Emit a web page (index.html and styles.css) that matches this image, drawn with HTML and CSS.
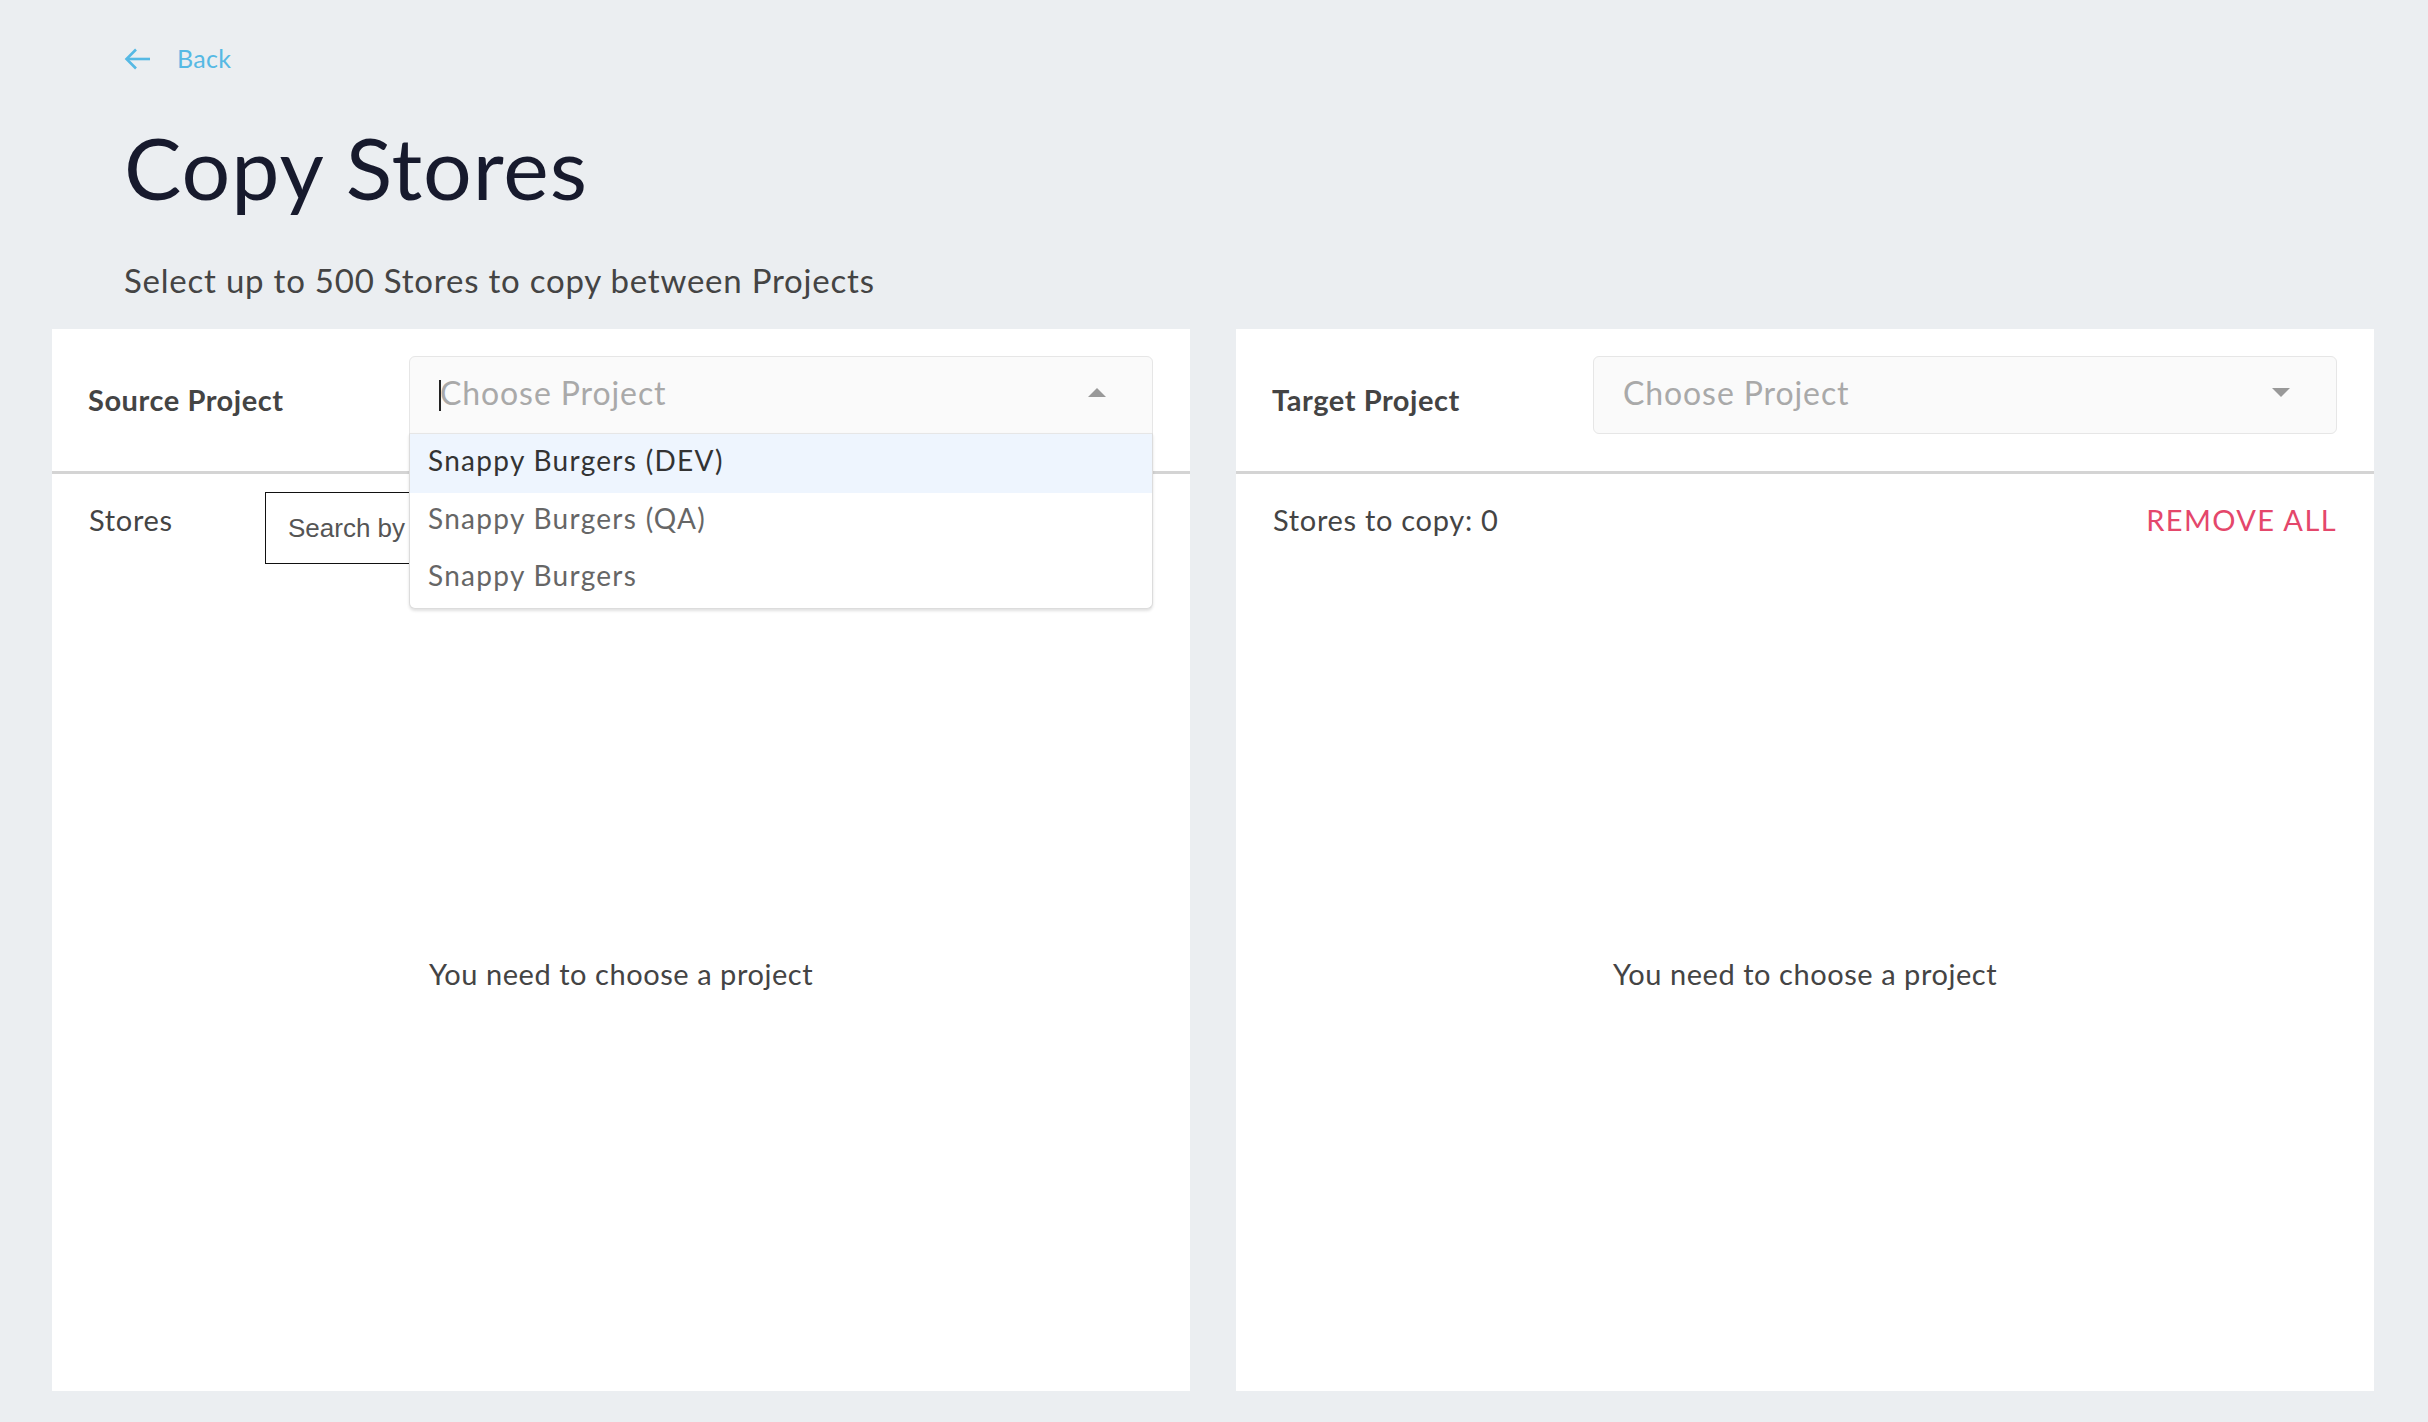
FILE: index.html
```html
<!DOCTYPE html>
<html lang="en">
<head>
<meta charset="utf-8">
<title>Copy Stores</title>
<link rel="stylesheet" href="styles.css">
</head>
<body>
<div class="page">
  <header class="page-head">
    <a class="back" href="#">
      <svg class="back-icon" width="26" height="22" viewBox="0 0 26 22" fill="none" stroke="currentColor" stroke-width="2.6" stroke-linecap="butt" stroke-linejoin="miter">
        <path d="M26 11 H3"/>
        <path d="M12 1.5 L2.5 11 L12 20.5"/>
      </svg>
      <span>Back</span>
    </a>
    <h1 class="title">Copy Stores</h1>
    <p class="subtitle">Select up to 500 Stores to copy between Projects</p>
  </header>

  <main class="columns">
    <section class="panel">
      <div class="panel-head">
        <div class="head-label">Source Project</div>
        <div class="select-wrap">
          <div class="select open">
            <span class="caret-line"></span><span class="placeholder">Choose Project</span>
            <span class="tri tri-up"></span>
          </div>
          <ul class="menu">
            <li class="option active">Snappy Burgers (DEV)</li>
            <li class="option">Snappy Burgers (QA)</li>
            <li class="option">Snappy Burgers</li>
          </ul>
        </div>
      </div>
      <div class="panel-row">
        <div class="row-label stores-label">Stores</div>
        <input class="search" type="text" placeholder="Search by name or ID">
      </div>
      <div class="empty">You need to choose a project</div>
    </section>

    <section class="panel">
      <div class="panel-head">
        <div class="head-label">Target Project</div>
        <div class="select-wrap">
          <div class="select">
            <span class="placeholder">Choose Project</span>
            <span class="tri tri-down"></span>
          </div>
        </div>
      </div>
      <div class="panel-row spread">
        <div class="row-label">Stores to copy: 0</div>
        <a class="remove-all" href="#">REMOVE ALL</a>
      </div>
      <div class="empty">You need to choose a project</div>
    </section>
  </main>
</div>
</body>
</html>
```

FILE: styles.css
```css
* { box-sizing: border-box; }

html, body {
  margin: 0;
  padding: 0;
  background: #ebeef1;
}

body {
  font-family: Lato, "Noto Sans", sans-serif;
  color: #444;
  width: 2428px;
  height: 1422px;
  overflow: hidden;
}

.page {
  padding: 43px 54px 0 52px;
}

.page-head {
  padding-left: 72px;
}

.back {
  display: flex;
  align-items: center;
  gap: 27px;
  height: 30px;
  color: #56b9e4;
  text-decoration: none;
  font-size: 25px;
  line-height: 30px;
  letter-spacing: 0.3px;
}

.back-icon {
  display: block;
  margin-top: 2px;
}

.title {
  margin: 44px 0 0 0;
  font-size: 86px;
  line-height: 100px;
  font-weight: 400;
  color: #171a2d;
  letter-spacing: 1px;
}

.subtitle {
  margin: 43px 0 0 0;
  font-size: 33px;
  line-height: 40px;
  color: #444;
  letter-spacing: 0.78px;
}

.columns {
  margin-top: 29px;
  display: grid;
  grid-template-columns: 1fr 1fr;
  gap: 46px;
}

.panel {
  background: #fff;
  height: 1062px;
  display: flex;
  flex-direction: column;
}

.panel-head {
  display: flex;
  align-items: flex-start;
  height: 145px;
  padding: 27px 37px 0 36px;
  border-bottom: 3px solid #d4d4d4;
}

.head-label {
  width: 321px;
  flex: none;
  margin-top: 24px;
  font-size: 29px;
  line-height: 40px;
  font-weight: 700;
  color: #444;
  letter-spacing: 0.55px;
}

.select-wrap {
  position: relative;
  flex: 1;
}

.select {
  display: flex;
  align-items: center;
  height: 78px;
  padding: 0 46px 4px 29px;
  background: #fafafa;
  border: 1px solid #e6e6e6;
  border-radius: 6px;
}

.select.open {
  border-radius: 6px 6px 0 0;
}

.caret-line {
  width: 2px;
  height: 31px;
  background: #222;
  margin-right: -1px;
  margin-top: 4px;
}

.placeholder {
  flex: 1;
  font-size: 32px;
  line-height: 40px;
  color: #a9a9a9;
  letter-spacing: 0.9px;
}

.tri {
  width: 0;
  height: 0;
  border-left: 9px solid transparent;
  border-right: 9px solid transparent;
}

.tri-up {
  border-bottom: 9px solid #999;
  margin-top: -2px;
}

.tri-down {
  border-top: 9px solid #999;
  margin-top: -2px;
}

.menu {
  position: absolute;
  z-index: 5;
  top: 77px;
  left: 0;
  right: 0;
  margin: 0;
  padding: 0 0 1px 0;
  list-style: none;
  background: #fff;
  border: 1px solid #dcdcdc;
  border-top: 1px solid #e6e6e6;
  border-radius: 0 0 6px 6px;
  box-shadow: 0 2px 3px rgba(0, 0, 0, 0.12);
}

.option {
  height: 57px;
  display: flex;
  align-items: center;
  padding-left: 18px;
  padding-bottom: 7px;
  font-size: 28px;
  color: #666;
  letter-spacing: 1.3px;
}

.option.active {
  height: 59px;
  background: #eef5fe;
  color: #333;
}

.panel-row {
  display: flex;
  align-items: flex-start;
  height: 90px;
  padding: 18px 37px 0 37px;
}

.panel-row.spread {
  justify-content: space-between;
}

.row-label {
  margin-top: 8px;
  font-size: 29px;
  line-height: 40px;
  color: #444;
  letter-spacing: 0.7px;
}

.stores-label {
  width: 176px;
  flex: none;
}

.search {
  flex: 1;
  height: 72px;
  border: 1px solid #111;
  border-radius: 0;
  padding: 0 16px 0 22px;
  font-family: "Liberation Sans", Arial, sans-serif;
  font-size: 26px;
  color: #555;
  background: #fff;
  outline: none;
}

.search::placeholder {
  color: #555;
}

.remove-all {
  margin-top: 8px;
  font-size: 29px;
  line-height: 40px;
  color: #e4476b;
  text-decoration: none;
  letter-spacing: 1.4px;
}

.empty {
  flex: 1;
  display: flex;
  align-items: center;
  justify-content: center;
  font-size: 29px;
  color: #444;
  padding-bottom: 8px;
  letter-spacing: 0.55px;
}
```
